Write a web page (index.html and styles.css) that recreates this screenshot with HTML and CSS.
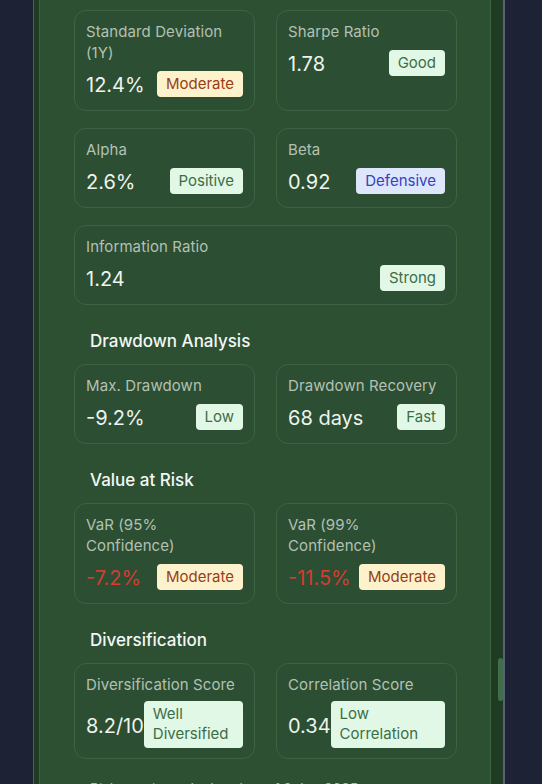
FILE: index.html
```html
<!DOCTYPE html>
<html lang="en">
<head>
<meta charset="utf-8">
<title>Risk Metrics</title>
<link rel="stylesheet" href="styles.css">
</head>
<body>
<div class="frame">
  <div class="panel">
    <div class="grid">
      <div class="card">
        <div class="label">Standard Deviation (1Y)</div>
        <div class="row"><span class="value">12.4%</span><span class="badge amber">Moderate</span></div>
      </div>
      <div class="card">
        <div class="label">Sharpe Ratio</div>
        <div class="row"><span class="value">1.78</span><span class="badge green">Good</span></div>
      </div>
      <div class="card">
        <div class="label">Alpha</div>
        <div class="row"><span class="value">2.6%</span><span class="badge green">Positive</span></div>
      </div>
      <div class="card">
        <div class="label">Beta</div>
        <div class="row"><span class="value">0.92</span><span class="badge blue">Defensive</span></div>
      </div>
      <div class="card wide">
        <div class="label">Information Ratio</div>
        <div class="row"><span class="value">1.24</span><span class="badge green">Strong</span></div>
      </div>
    </div>

    <h3 class="section-title">Drawdown Analysis</h3>
    <div class="grid">
      <div class="card">
        <div class="label">Max. Drawdown</div>
        <div class="row"><span class="value">-9.2%</span><span class="badge green">Low</span></div>
      </div>
      <div class="card">
        <div class="label">Drawdown Recovery</div>
        <div class="row"><span class="value">68 days</span><span class="badge green">Fast</span></div>
      </div>
    </div>

    <h3 class="section-title">Value at Risk</h3>
    <div class="grid">
      <div class="card">
        <div class="label">VaR (95% Confidence)</div>
        <div class="row"><span class="value neg">-7.2%</span><span class="badge amber">Moderate</span></div>
      </div>
      <div class="card">
        <div class="label">VaR (99% Confidence)</div>
        <div class="row"><span class="value neg">-11.5%</span><span class="badge amber">Moderate</span></div>
      </div>
    </div>

    <h3 class="section-title">Diversification</h3>
    <div class="grid">
      <div class="card">
        <div class="label">Diversification Score</div>
        <div class="row tall"><span class="value">8.2/10</span><span class="badge green">Well Diversified</span></div>
      </div>
      <div class="card">
        <div class="label">Correlation Score</div>
        <div class="row tall"><span class="value">0.34</span><span class="badge green">Low Correlation</span></div>
      </div>
    </div>

    <p class="footnote">Risk metrics calculated as of 2 Jan 2025</p>
  </div>
  <div class="thumb"></div>
</div>
</body>
</html>
```
FILE: styles.css
```css
html, body {
  margin: 0;
  padding: 0;
  height: 100%;
}
body {
  background: #1e2235;
  font-family: Inter, "Noto Sans", sans-serif;
  overflow: hidden;
}
.frame {
  position: relative;
  box-sizing: border-box;
  margin-left: 33px;
  width: 472px;
  height: 784px;
  overflow: hidden;
  background: #1f3b22;
  border-left: 1px solid #52586f;
  border-right: 2px solid #5a607a;
  padding: 0 12px 0 5px;
}
.panel {
  box-sizing: border-box;
  width: 452px;
  min-height: 100%;
  background: #2d5033;
  border-left: 1px solid #3b6342;
  border-right: 1px solid #3b6342;
  padding: 10px 33px 20px 34px;
}
.thumb {
  position: absolute;
  left: 464px;
  top: 658px;
  width: 5px;
  height: 43px;
  border-radius: 3px;
  background: #3f6e48;
}
.grid {
  display: grid;
  grid-template-columns: 1fr 1fr;
  column-gap: 21px;
  row-gap: 17px;
}
.card {
  border: 1px solid #3c6443;
  border-radius: 12px;
  background: #2c4e32;
  padding: 10px 11px;
  min-width: 0;
}
.card.wide {
  grid-column: 1 / span 2;
}
.label {
  font-size: 15px;
  line-height: 21px;
  color: #b3c1b5;
  letter-spacing: 0.1px;
}
.row {
  margin-top: 5px;
  display: flex;
  align-items: center;
  justify-content: space-between;
  min-height: 32px;
}
.row.tall {
  margin-top: 6px;
}
.value {
  font-size: 20px;
  line-height: 30px;
  padding-top: 2px;
  color: #eef3ee;
  white-space: nowrap;
  flex: none;
}
.value.neg {
  color: #d23d31;
}
.badge {
  font-size: 15px;
  line-height: 20px;
  padding: 3px 9px;
  border-radius: 4px;
  min-width: 0;
}
.row.tall .badge {
  padding: 3px 9px 4px;
}
.badge.amber {
  background: #fdf2cc;
  color: #974016;
}
.badge.green {
  background: #e1f8e6;
  color: #3d6d47;
}
.badge.blue {
  background: #dde6fb;
  color: #3442bf;
}
.section-title {
  margin: 24px 0 11px;
  padding-left: 16px;
  font-size: 17px;
  line-height: 24px;
  font-weight: 500;
  color: #f4f7f4;
}
.footnote {
  margin: 20px 0 0;
  padding-left: 16px;
  font-size: 14px;
  line-height: 20px;
  color: #a9b9ab;
}
```
